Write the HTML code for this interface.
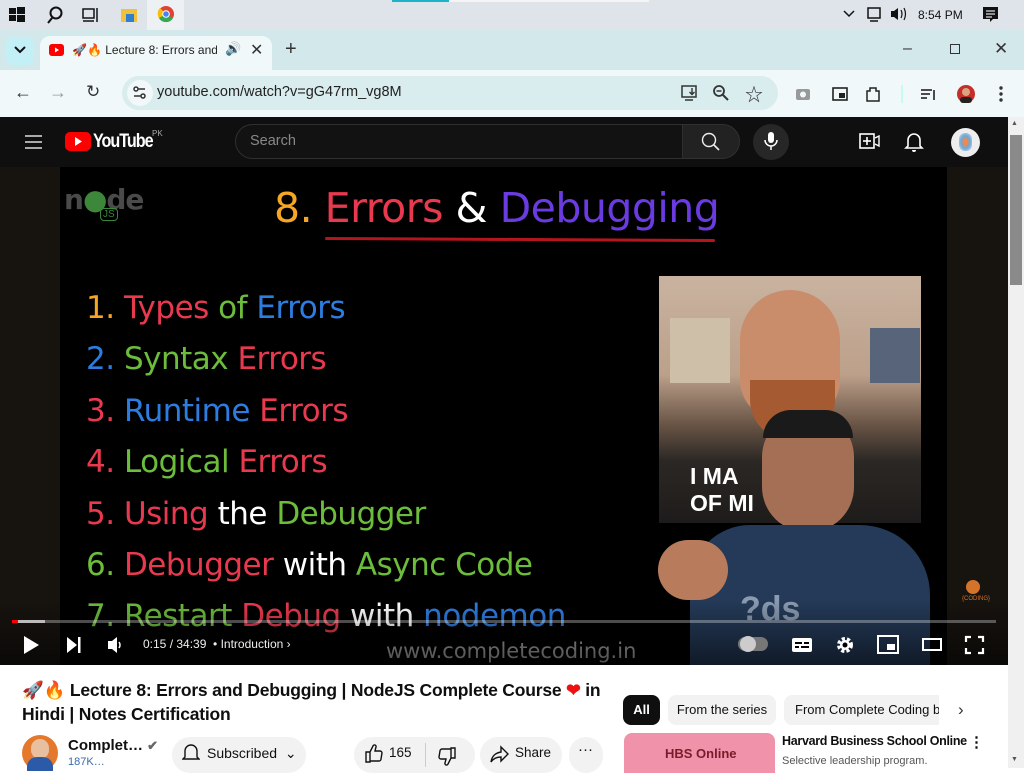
<!DOCTYPE html>
<html><head><meta charset="utf-8"><style>
*{margin:0;padding:0;box-sizing:border-box}
body{width:1024px;height:768px;overflow:hidden;position:relative;font-family:"Liberation Sans","Noto Sans CJK SC",sans-serif;background:#fff}
.a{position:absolute}
.vt{position:absolute;font-family:"DejaVu Sans","Liberation Sans",sans-serif;font-size:31px;white-space:nowrap;letter-spacing:-0.5px}
</style></head><body>
<!-- taskbar -->
<div class="a" style="left:0;top:0;width:1024px;height:30px;background:#dfe4ea"></div>
<div class="a" style="left:147px;top:0;width:37px;height:30px;background:#eef1f4"></div>
<div class="a" style="left:392px;top:0;width:57px;height:2px;background:#1cb4c8"></div>
<div class="a" style="left:449px;top:0;width:200px;height:2px;background:#f4f4f4"></div>
<svg class="a" style="left:0;top:0" width="200" height="30">
<g fill="#111"><rect x="9" y="8" width="7" height="6"/><rect x="17" y="7" width="8" height="7"/><rect x="9" y="15" width="7" height="6"/><rect x="17" y="15" width="8" height="7"/></g>
<circle cx="56" cy="13" r="5.5" fill="none" stroke="#111" stroke-width="2"/><line x1="52" y1="18" x2="48" y2="23" stroke="#111" stroke-width="2"/>
<g fill="none" stroke="#111" stroke-width="1.5"><rect x="83" y="9" width="11" height="9"/><line x1="83" y1="21" x2="94" y2="21"/><line x1="97" y1="8" x2="97" y2="22"/></g>
<rect x="121" y="9" width="16" height="13" fill="#f0c13a"/><rect x="126" y="14" width="8" height="8" fill="#2e7fd0"/>
<circle cx="166" cy="14" r="8" fill="#e04234"/><path d="M166 14 L173 18 A8 8 0 0 1 159 18Z" fill="#34a853"/><path d="M166 14 L159 18 A8 8 0 0 1 160 8Z" fill="#fbbc05"/><circle cx="166" cy="14" r="3.8" fill="#fff"/><circle cx="166" cy="14" r="2.8" fill="#4285f4"/>
</svg>
<svg class="a" style="left:840;top:0" width="184" height="30">
<path d="M4 11 l5 5 l5-5" fill="none" stroke="#111" stroke-width="1.5"/>
<rect x="28" y="8" width="12" height="10" fill="none" stroke="#111" stroke-width="1.5"/><line x1="30" y1="21" x2="38" y2="21" stroke="#111" stroke-width="1.5"/>
<path d="M51 11 h3 l4-3 v12 l-4-3 h-3z" fill="#111"/><path d="M61 10 q2 4 0 8 M64 8 q3 6 0 12" fill="none" stroke="#111" stroke-width="1.2"/>
</svg>
<div class="a" style="left:918px;top:8px;font-size:12px;color:#111">8:54 PM</div>
<svg class="a" style="left:982;top:6" width="18" height="18"><path d="M1 1 h15 v12 h-5 l-3 3 v-3 h-7z" fill="#111"/><g stroke="#dfe4ea" stroke-width="1.2"><line x1="4" y1="5" x2="13" y2="5"/><line x1="4" y1="8" x2="13" y2="8"/><line x1="4" y1="11" x2="10" y2="11"/></g></svg>
<!-- tab strip -->
<div class="a" style="left:0;top:30px;width:1024px;height:40px;background:#d2e8ea"></div>
<div class="a" style="left:6px;top:37px;width:28px;height:28px;border-radius:8px;background:#c3f0f6"></div>
<svg class="a" style="left:14;top:46" width="12" height="8"><path d="M1 1 l5 5 l5-5" fill="none" stroke="#111" stroke-width="2"/></svg>
<div class="a" style="left:40px;top:36px;width:232px;height:34px;background:#f1f8f9;border-radius:10px 10px 0 0"></div>
<div class="a" style="left:49px;top:44px;width:15px;height:12px;background:#f00;border-radius:3px"></div>
<svg class="a" style="left:49;top:44" width="15" height="12"><path d="M6 3.5 l4 2.5 l-4 2.5z" fill="#fff"/></svg>
<div class="a" style="left:72px;top:43px;font-size:12px;color:#222;white-space:nowrap;width:145px;overflow:hidden">🚀🔥 Lecture 8: Errors and D</div>
<div class="a" style="left:225px;top:41px;font-size:13px;color:#333">🔊</div>
<div class="a" style="left:250px;top:40px;font-size:16px;color:#333">✕</div>
<div class="a" style="left:285px;top:38px;font-size:20px;color:#333">+</div>
<div class="a" style="left:903px;top:40px;font-size:16px;color:#333">–</div>
<div class="a" style="left:950px;top:44px;width:10px;height:10px;border:1.5px solid #333"></div>
<div class="a" style="left:994px;top:39px;font-size:17px;color:#333">✕</div>
<!-- toolbar -->
<div class="a" style="left:0;top:70px;width:1024px;height:47px;background:#f1f8f9"></div>
<div class="a" style="left:122px;top:76px;width:656px;height:34px;border-radius:17px;background:#d9ecee"></div>
<div class="a" style="left:127px;top:80px;width:26px;height:26px;border-radius:13px;background:#f2f8f9"></div>
<div class="a" style="left:14px;top:82px;font-size:18px;color:#333">←</div>
<div class="a" style="left:49px;top:82px;font-size:18px;color:#999">→</div>
<div class="a" style="left:86px;top:82px;font-size:17px;color:#333">↻</div>
<svg class="a" style="left:131;top:85" width="18" height="16"><g stroke="#333" stroke-width="1.5" fill="none"><line x1="3" y1="4" x2="14" y2="4"/><line x1="3" y1="11" x2="14" y2="11"/><circle cx="5" cy="4" r="2" fill="#f2f8f9"/><circle cx="12" cy="11" r="2" fill="#f2f8f9"/></g></svg>
<div class="a" style="left:157px;top:84px;font-size:14.5px;color:#222">youtube.com/watch?v=gG47rm_vg8M</div>
<svg class="a" style="left:680;top:84" width="20" height="18"><rect x="2" y="2" width="14" height="11" fill="none" stroke="#333" stroke-width="1.5"/><line x1="5" y1="16" x2="13" y2="16" stroke="#333" stroke-width="1.5"/><path d="M12 4 v6 M9.5 8 l2.5 2.5 l2.5 -2.5" stroke="#333" fill="none" stroke-width="1.4"/></svg>
<svg class="a" style="left:712;top:84" width="18" height="18"><circle cx="7" cy="7" r="5" fill="none" stroke="#333" stroke-width="1.8"/><line x1="11" y1="11" x2="16" y2="16" stroke="#333" stroke-width="2"/><line x1="4.5" y1="7" x2="9.5" y2="7" stroke="#333" stroke-width="1.5"/></svg>
<div class="a" style="left:745px;top:81px;font-size:18px;color:#333">☆</div>
<svg class="a" style="left:794;top:84" width="220" height="20">
<rect x="2" y="5" width="14" height="11" rx="2" fill="#999"/><circle cx="9" cy="10.5" r="3" fill="#f1f8f9"/>
<rect x="39" y="4" width="14" height="12" fill="none" stroke="#222" stroke-width="1.6"/><rect x="45" y="9" width="6" height="5" fill="#222"/>
<path d="M76 4 h6 v3 h3 v10 h-12 v-10 h3z" fill="none" stroke="#222" stroke-width="1.5"/>
<line x1="108" y1="1" x2="108" y2="19" stroke="#9fd" stroke-width="1"/>
<g stroke="#222" stroke-width="1.6"><line x1="127" y1="6" x2="138" y2="6"/><line x1="127" y1="10" x2="136" y2="10"/><line x1="127" y1="14" x2="133" y2="14"/><line x1="140" y1="6" x2="140" y2="16"/></g>
<circle cx="172" cy="10" r="9" fill="#c62e2a"/><circle cx="172" cy="8" r="4" fill="#d9a580"/><rect x="166" y="13" width="12" height="6" rx="3" fill="#222"/>
<g fill="#333"><circle cx="207" cy="4" r="1.7"/><circle cx="207" cy="10" r="1.7"/><circle cx="207" cy="16" r="1.7"/></g>
</svg>
<!-- yt header -->
<div class="a" style="left:0;top:117px;width:1008px;height:50px;background:#0f0f0f"></div>
<div class="a" style="left:1008px;top:117px;width:16px;height:651px;background:#f0f0f0"></div>
<div class="a" style="left:1010px;top:135px;width:12px;height:150px;background:#8a8a8a"></div>
<div class="a" style="left:1011px;top:120px;font-size:7px;color:#555">▲</div>
<div class="a" style="left:1011px;top:756px;font-size:7px;color:#555">▼</div>
<svg class="a" style="left:24;top:134" width="20" height="16"><g stroke="#ddd" stroke-width="1.6"><line x1="1" y1="2" x2="18" y2="2"/><line x1="1" y1="8" x2="18" y2="8"/><line x1="1" y1="14" x2="18" y2="14"/></g></svg>
<div class="a" style="left:65px;top:132px;width:26px;height:19px;background:#f00;border-radius:5px"></div>
<svg class="a" style="left:65;top:132" width="26" height="19"><path d="M10 5 l7 4.5 l-7 4.5z" fill="#fff"/></svg>
<div class="a" style="left:93px;top:131px;font-size:19px;color:#fff;letter-spacing:-1.2px;font-weight:bold;transform:scaleX(.85);transform-origin:left">YouTube</div>
<div class="a" style="left:152px;top:129px;font-size:8px;color:#aaa">PK</div>
<div class="a" style="left:235px;top:124px;width:448px;height:35px;border:1px solid #303030;border-radius:18px 0 0 18px;background:#121212"></div>
<div class="a" style="left:250px;top:133px;font-size:14.5px;color:#888">Search</div>
<div class="a" style="left:682px;top:124px;width:58px;height:35px;border:1px solid #303030;border-radius:0 18px 18px 0;background:#222"></div>
<svg class="a" style="left:700;top:131" width="22" height="22"><circle cx="9" cy="9" r="6.5" fill="none" stroke="#eee" stroke-width="1.4"/><line x1="14" y1="14" x2="19" y2="19" stroke="#eee" stroke-width="1.6"/></svg>
<div class="a" style="left:753px;top:124px;width:36px;height:36px;border-radius:18px;background:#272727"></div>
<svg class="a" style="left:763;top:131" width="16" height="22"><rect x="5" y="1" width="6" height="11" rx="3" fill="#fff"/><path d="M2 9 a6 6 0 0 0 12 0" fill="none" stroke="#fff" stroke-width="1.5"/><line x1="8" y1="15" x2="8" y2="19" stroke="#fff" stroke-width="1.5"/></svg>
<svg class="a" style="left:858;top:130" width="24" height="22"><rect x="2" y="4" width="14" height="14" fill="none" stroke="#fff" stroke-width="1.6"/><line x1="9" y1="7" x2="9" y2="15" stroke="#fff" stroke-width="1.6"/><line x1="5" y1="11" x2="13" y2="11" stroke="#fff" stroke-width="1.6"/><path d="M17 8 l4 -2 v10 l-4 -2" fill="none" stroke="#fff" stroke-width="1.4"/></svg>
<svg class="a" style="left:904;top:130" width="20" height="24"><path d="M4 16 v-6 a6 6 0 0 1 12 0 v6 l2 2 h-16z" fill="none" stroke="#fff" stroke-width="1.6"/><path d="M8 20 a2 2 0 0 0 4 0" fill="#fff"/></svg>
<div class="a" style="left:951px;top:128px;width:29px;height:29px;border-radius:15px;background:#eee"></div>
<div class="a" style="left:959px;top:133px;width:13px;height:18px;border-radius:6px;background:radial-gradient(#e85 20%,#6ad 50%,#bcd 80%)"></div>
<!-- video -->
<div class="a" style="left:0;top:167px;width:1008px;height:498px;background:#17130f"></div>
<div class="a" style="left:60px;top:167px;width:887px;height:498px;background:#000"></div>
<div class="a" style="left:64px;top:183px;font-family:'DejaVu Sans',sans-serif;font-weight:bold;font-size:28px;color:#4a4a4a;letter-spacing:-1px">n<span style="color:#3c873a">●</span>de</div>
<div class="a" style="left:100px;top:208px;font-size:10px;color:#3c873a;border:1.5px solid #3c873a;border-radius:4px;padding:0 2px">JS</div>
<div class="vt" style="left:274px;top:184px;font-size:41px;letter-spacing:-0.5px"><span style="color:#f6a623">8.</span> <span style="color:#e8394e">Errors</span> <span style="color:#fff">&amp;</span> <span style="color:#6a3be0">Debugging</span></div>
<div class="a" style="left:325px;top:238px;width:390px;height:3px;background:#b3161d;border-radius:2px;transform:rotate(.3deg)"></div>
<div class="vt" style="left:86px;top:290px"><span style="color:#f6a623">1.</span> <span style="color:#e8394e">Types</span> <span style="color:#6dbd3c">of</span> <span style="color:#2d7de0">Errors</span></div>
<div class="vt" style="left:86px;top:341px"><span style="color:#2d7de0">2.</span> <span style="color:#6dbd3c">Syntax</span> <span style="color:#e8394e">Errors</span></div>
<div class="vt" style="left:86px;top:393px"><span style="color:#e8394e">3.</span> <span style="color:#2d7de0">Runtime</span> <span style="color:#e8394e">Errors</span></div>
<div class="vt" style="left:86px;top:444px"><span style="color:#e8394e">4.</span> <span style="color:#6dbd3c">Logical</span> <span style="color:#e8394e">Errors</span></div>
<div class="vt" style="left:86px;top:496px"><span style="color:#e8394e">5.</span> <span style="color:#e8394e">Using</span> <span style="color:#fff">the</span> <span style="color:#6dbd3c">Debugger</span></div>
<div class="vt" style="left:86px;top:547px"><span style="color:#6dbd3c">6.</span> <span style="color:#e8394e">Debugger</span> <span style="color:#fff">with</span> <span style="color:#6dbd3c">Async Code</span></div>
<div class="vt" style="left:86px;top:598px"><span style="color:#6dbd3c">7.</span> <span style="color:#6dbd3c">Restart</span> <span style="color:#e8394e">Debug</span> <span style="color:#fff">with</span> <span style="color:#2d7de0">nodemon</span></div>
<!-- meme image -->
<div class="a" style="left:659px;top:276px;width:262px;height:247px;background:linear-gradient(180deg,#c9b3a0 0%,#bca08a 40%,#6a5546 60%,#2b2724 75%,#1e1c1b 100%)"></div>
<div class="a" style="left:670px;top:318px;width:60px;height:65px;background:#cdbfa8"></div>
<div class="a" style="left:870px;top:328px;width:50px;height:55px;background:#57647a"></div>
<div class="a" style="left:740px;top:290px;width:100px;height:130px;border-radius:50px 50px 40px 40px;background:#c98d6c"></div>
<div class="a" style="left:750px;top:380px;width:85px;height:60px;border-radius:0 0 40px 40px;background:#a65a32"></div>
<div class="a" style="left:690px;top:463px;font-size:23px;font-weight:bold;color:#fff;line-height:27px;font-family:'Liberation Sans',sans-serif;white-space:pre">I MA        OT
OF MI      KES</div>
<div class="a" style="left:762px;top:412px;width:92px;height:120px;border-radius:45px;background:#a56f55"></div>
<div class="a" style="left:763px;top:410px;width:90px;height:28px;border-radius:45px 45px 0 0;background:#1a1a1a"></div>
<div class="a" style="left:690px;top:525px;width:240px;height:140px;border-radius:60px 70px 0 0;background:#243a58"></div>
<div class="a" style="left:658px;top:540px;width:70px;height:60px;border-radius:30px;background:#b87c5c"></div>
<div class="a" style="left:740px;top:590px;font-size:34px;font-weight:bold;color:#8a9ab0">?ds</div>
<div class="a" style="left:966px;top:580px;width:14px;height:14px;border-radius:7px;background:#d4742a"></div>
<div class="a" style="left:962px;top:596px;font-size:6px;color:#d4742a">{CODING}</div>
<div class="a" style="left:386px;top:639px;font-size:21px;color:#a8a8a8;font-family:'DejaVu Sans',sans-serif">www.completecoding.in</div>
<!-- controls -->
<div class="a" style="left:0;top:600px;width:1008px;height:65px;background:linear-gradient(transparent,rgba(0,0,0,.55))"></div>
<div class="a" style="left:12px;top:620px;width:984px;height:3px;background:rgba(255,255,255,.3)"></div>
<div class="a" style="left:12px;top:620px;width:6px;height:3px;background:#f00"></div>
<div class="a" style="left:18px;top:620px;width:27px;height:3px;background:rgba(255,255,255,.6)"></div>
<svg class="a" style="left:20;top:633" width="300" height="24">
<path d="M4 3 l15 9 l-15 9z" fill="#fff"/>
<path d="M47 4 l10 8 l-10 8z" fill="#fff"/><rect x="58" y="4" width="2.5" height="16" fill="#fff"/>
<path d="M88 8 h4 l5-4 v16 l-5-4 h-4z" fill="#fff"/><path d="M99 9 q2 3 0 6" stroke="#fff" fill="none" stroke-width="1.5"/>
</svg>
<div class="a" style="left:143px;top:637px;font-size:12px;color:#eee">0:15 / 34:39 &nbsp;•&nbsp;Introduction ›</div>
<div class="a" style="left:738px;top:637px;width:30px;height:14px;border-radius:7px;background:#777"></div>
<div class="a" style="left:740px;top:636px;width:16px;height:16px;border-radius:8px;background:#ccc"></div>
<svg class="a" style="left:790;top:632" width="200" height="26">
<rect x="2" y="6" width="20" height="14" rx="2" fill="#fff"/><g stroke="#000" stroke-width="2"><line x1="5" y1="11" x2="12" y2="11"/><line x1="14" y1="11" x2="19" y2="11"/><line x1="5" y1="15" x2="9" y2="15"/><line x1="11" y1="15" x2="19" y2="15"/></g>
<circle cx="55" cy="13" r="6" fill="none" stroke="#fff" stroke-width="4" stroke-dasharray="3 2"/><circle cx="55" cy="13" r="5" fill="#fff"/><circle cx="55" cy="13" r="2.5" fill="#000"/>
<rect x="88" y="4" width="20" height="17" fill="none" stroke="#fff" stroke-width="2"/><rect x="97" y="12" width="8" height="6" fill="#fff"/>
<rect x="133" y="7" width="18" height="11" fill="none" stroke="#fff" stroke-width="2"/>
<path d="M176 10 v-5 h5 M188 5 h5 v5 M193 16 v5 h-5 M181 21 h-5 v-5" fill="none" stroke="#fff" stroke-width="2.2"/>
</svg>
<!-- below video -->
<div class="a" style="left:22px;top:678px;width:590px;font-size:17.5px;font-weight:bold;color:#0f0f0f;line-height:24px;letter-spacing:-0.2px">🚀🔥 Lecture 8: Errors and Debugging | NodeJS Complete Course <span style="color:#e11">❤</span> in Hindi | Notes Certification</div>
<div class="a" style="left:22px;top:735px;width:36px;height:36px;border-radius:18px;background:#e4792e"></div>
<div class="a" style="left:31px;top:739px;width:18px;height:20px;border-radius:9px;background:#e8c0a0"></div>
<div class="a" style="left:27px;top:757px;width:26px;height:14px;background:#2a5aa8;border-radius:10px 10px 0 0"></div>
<div class="a" style="left:68px;top:737px;font-size:15px;font-weight:bold;color:#0f0f0f">Complet… <span style="color:#666;font-size:13px">✔</span></div>
<div class="a" style="left:68px;top:756px;font-size:11px;color:#3a6ab0">187K…</div>
<div class="a" style="left:172px;top:737px;width:134px;height:36px;border-radius:18px;background:#f2f2f2"></div>
<svg class="a" style="left:182;top:742" width="18" height="22"><path d="M3 15 v-6 a6 6 0 0 1 12 0 v6 l2 2 h-16z" fill="none" stroke="#111" stroke-width="1.4"/></svg>
<div class="a" style="left:207px;top:745px;font-size:14px;color:#0f0f0f">Subscribed &nbsp;⌄</div>
<div class="a" style="left:354px;top:737px;width:121px;height:36px;border-radius:18px;background:#f2f2f2"></div>
<div class="a" style="left:425px;top:743px;width:1px;height:24px;background:#ccc"></div>
<svg class="a" style="left:363;top:743" width="22" height="22"><path d="M3 9 h4 v10 h-4z M7 18 h9 a2 2 0 0 0 2-2 l1-6 a2 2 0 0 0-2-2 h-5 l1-4 a1.5 1.5 0 0 0-3-1 l-3 6" fill="none" stroke="#111" stroke-width="1.4"/></svg>
<div class="a" style="left:389px;top:745px;font-size:13.5px;color:#111">165</div>
<svg class="a" style="left:436;top:745" width="22" height="22"><g transform="rotate(180 11 11)"><path d="M3 9 h4 v10 h-4z M7 18 h9 a2 2 0 0 0 2-2 l1-6 a2 2 0 0 0-2-2 h-5 l1-4 a1.5 1.5 0 0 0-3-1 l-3 6" fill="none" stroke="#111" stroke-width="1.4"/></g></svg>
<div class="a" style="left:480px;top:737px;width:82px;height:36px;border-radius:18px;background:#f2f2f2"></div>
<svg class="a" style="left:489;top:744" width="22" height="22"><path d="M12 3 l7 7 l-7 7 v-4 c-5 0-8 2-10 5 c1-6 4-9 10-10z" fill="none" stroke="#111" stroke-width="1.4"/></svg>
<div class="a" style="left:515px;top:745px;font-size:13.5px;color:#111">Share</div>
<div class="a" style="left:569px;top:737px;width:34px;height:36px;border-radius:18px;background:#f2f2f2"></div>
<div class="a" style="left:578px;top:741px;font-size:15px;color:#111">···</div>
<!-- chips -->
<div class="a" style="left:623px;top:695px;width:37px;height:30px;border-radius:8px;background:#0f0f0f;color:#fff;font-size:13px;font-weight:bold;text-align:center;line-height:30px">All</div>
<div class="a" style="left:668px;top:695px;width:108px;height:30px;border-radius:8px;background:#f2f2f2;color:#0f0f0f;font-size:13px;text-align:center;line-height:30px">From the series</div>
<div class="a" style="left:784px;top:695px;width:155px;height:30px;border-radius:8px 0 0 8px;background:#f2f2f2;color:#0f0f0f;font-size:13px;line-height:30px;padding-left:11px;white-space:nowrap;overflow:hidden">From Complete Coding by</div>
<div class="a" style="left:958px;top:700px;font-size:17px;color:#333">›</div>
<div class="a" style="left:624px;top:733px;width:151px;height:40px;border-radius:8px 8px 0 0;background:#f092aa"></div>
<div class="a" style="left:665px;top:746px;font-size:13px;font-weight:bold;color:#7a1a2a">HBS Online</div>
<div class="a" style="left:782px;top:734px;font-size:12.5px;font-weight:bold;color:#0f0f0f;letter-spacing:-0.3px;white-space:nowrap">Harvard Business School Online</div>
<div class="a" style="left:969px;top:733px;font-size:15px;color:#111;font-weight:bold">⋮</div>
<div class="a" style="left:782px;top:755px;font-size:11px;color:#555">Selective leadership program.</div>
</body></html>
